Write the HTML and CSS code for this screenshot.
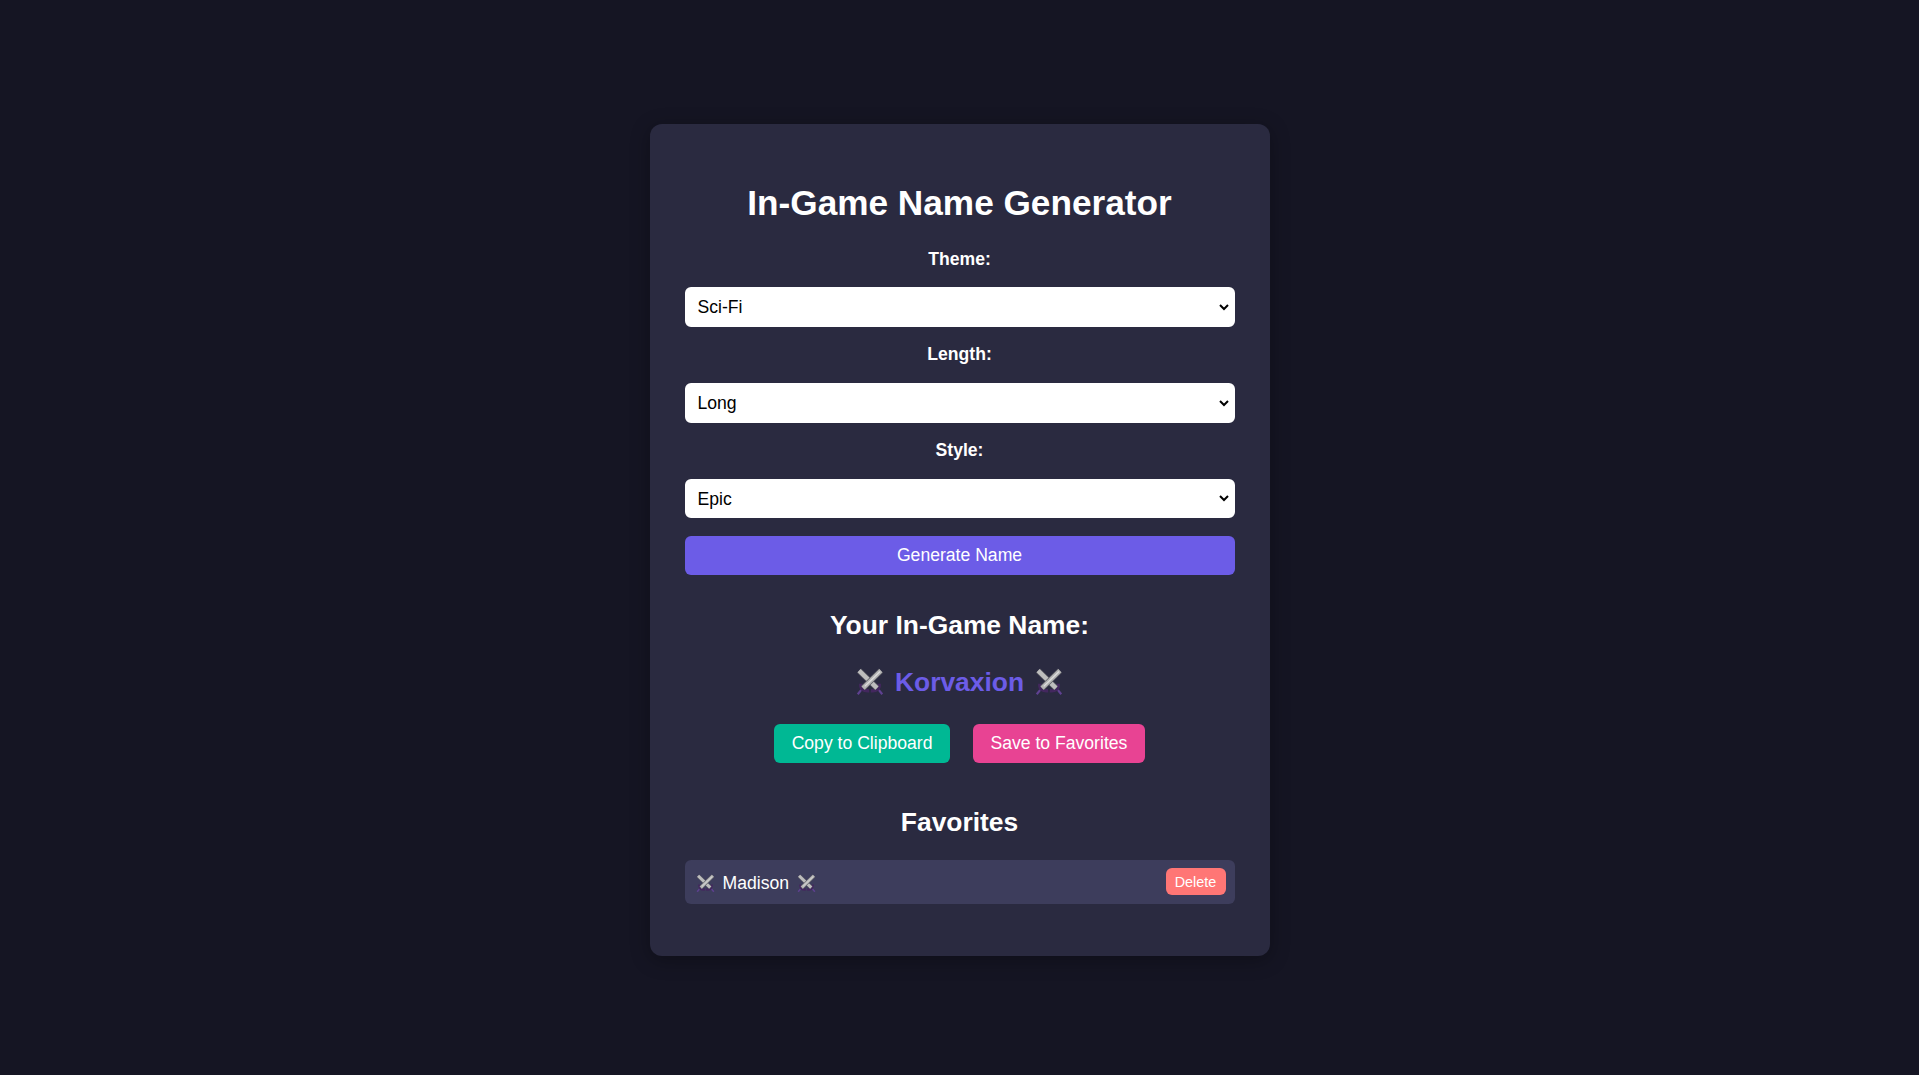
FILE: index.html
```html
<!DOCTYPE html>
<html lang="en">

<head>
   <meta charset="UTF-8" />
   <meta name="viewport" content="width=device-width, initial-scale=1" />
   <title>In-Game Name Generator</title>
   <link rel="stylesheet" href="styles.css">
</head>

<body>
   <svg class="defs" width="0" height="0" aria-hidden="true">
      <symbol id="swords" viewBox="0 0 32 32">
         <path d="M6 25 L2 30" class="pommel" />
         <path d="M26 25 L30 30" class="pommel" />
         <path d="M5.5 18 Q5 27 15 26" class="guard" />
         <path d="M26.5 18 Q27 27 17 26" class="guard" />
         <path d="M3.5 3 L24 23" class="blade-edge" />
         <path d="M3.5 3 L24 23" class="blade-a" />
         <path d="M28.5 3 L8 23" class="blade-edge" />
         <path d="M28.5 3 L8 23" class="blade-b" />
         <path d="M27.5 4 L10 21" class="blade-ridge" />
      </symbol>
   </svg>

   <div class="container">
      <h1>In-Game Name Generator</h1>

      <label for="theme">Theme:</label>
      <select id="theme">
         <option>Sci-Fi</option>
      </select>

      <label for="length">Length:</label>
      <select id="length">
         <option>Long</option>
      </select>

      <label for="style">Style:</label>
      <select id="style">
         <option>Epic</option>
      </select>

      <button class="generate-btn" type="button">Generate Name</button>

      <h2>Your In-Game Name:</h2>
      <div class="name-display">
         <svg class="swords-big"><use href="#swords" /></svg>
         <span>Korvaxion</span>
         <svg class="swords-big"><use href="#swords" /></svg>
      </div>

      <div class="actions">
         <button class="copy-btn" type="button">Copy to Clipboard</button>
         <button class="save-btn" type="button">Save to Favorites</button>
      </div>

      <h2 class="favorites-title">Favorites</h2>
      <div class="favorite-item">
         <div class="favorite-name">
            <svg class="swords-small"><use href="#swords" /></svg>
            <span>Madison</span>
            <svg class="swords-small"><use href="#swords" /></svg>
         </div>
         <button class="delete-btn" type="button">Delete</button>
      </div>
   </div>
</body>

</html>
```

FILE: styles.css
```css
:root {
   --bg: #151523;
   --card: #2a2a40;
   --item: #3d3d5c;
   --primary: #6c5ce7;
   --green: #00b894;
   --pink: #e84393;
   --red: #ff7675;
   --radius: 6px;
}

* {
   box-sizing: border-box;
}

body {
   margin: 0;
   min-height: 100vh;
   background: var(--bg);
   color: #ffffff;
   font-family: "Liberation Sans", Arial, sans-serif;
   display: flex;
   align-items: center;
   justify-content: center;
}

.defs {
   position: absolute;
}

.container {
   width: 620px;
   padding: 40px 35px 52.4px;
   margin-top: 5px;
   background: var(--card);
   border-radius: 12px;
   box-shadow: 0 4px 20px rgba(0, 0, 0, 0.3);
   text-align: center;
}

h1 {
   font-size: 35.2px;
   line-height: 40px;
   margin: 19px 0 25.6px;
}

label {
   display: block;
   font-size: 17.6px;
   line-height: 20px;
   font-weight: bold;
   margin: 0 0 18.8px;
}

select {
   display: block;
   width: 100%;
   height: 39.4px;
   padding: 0 6px;
   margin-bottom: 17.6px;
   border: 3px solid #ffffff;
   border-radius: var(--radius);
   background: #ffffff;
   color: #000000;
   font-family: inherit;
   font-size: 17.6px;
}

button {
   border: none;
   border-radius: var(--radius);
   color: #ffffff;
   font-family: inherit;
   font-size: 17.6px;
   cursor: pointer;
}

.generate-btn {
   display: block;
   width: 100%;
   height: 39.4px;
   background: var(--primary);
}

h2 {
   font-size: 26.4px;
   line-height: 30px;
   margin: 35px 0 0;
}

.name-display {
   display: flex;
   align-items: center;
   justify-content: center;
   gap: 11px;
   margin-top: 26px;
   color: var(--primary);
   font-size: 26.4px;
   font-weight: bold;
   line-height: 32px;
}

.swords-big {
   width: 28px;
   height: 28px;
}

.actions {
   display: flex;
   justify-content: center;
   gap: 23px;
   margin-top: 25.6px;
}

.actions button {
   height: 39.4px;
   padding: 0 17.5px;
}

.copy-btn {
   background: var(--green);
}

.save-btn {
   background: var(--pink);
}

.favorites-title {
   margin-top: 44px;
}

.favorite-item {
   display: flex;
   align-items: center;
   justify-content: space-between;
   height: 43.6px;
   margin-top: 22.6px;
   padding: 0 9px 0 11px;
   background: var(--item);
   border-radius: var(--radius);
}

.favorite-name {
   display: flex;
   align-items: center;
   gap: 8px;
   padding-top: 3px;
   font-size: 17.6px;
}

.swords-small {
   width: 19px;
   height: 19px;
}

.delete-btn {
   width: 60px;
   height: 27px;
   padding: 0;
   background: var(--red);
   font-size: 14.4px;
}

.blade-edge {
   stroke: #55555f;
   stroke-width: 6.5;
   fill: none;
}

.blade-a {
   stroke: #bdbdbd;
   stroke-width: 5;
   fill: none;
}

.blade-b {
   stroke: #b4b4b4;
   stroke-width: 5;
   fill: none;
}

.blade-ridge {
   stroke: #dedede;
   stroke-width: 1.5;
   fill: none;
}

.guard {
   stroke: #43275e;
   stroke-width: 4;
   fill: none;
}

.pommel {
   stroke: #5f4191;
   stroke-width: 2.5;
   fill: none;
}
```
